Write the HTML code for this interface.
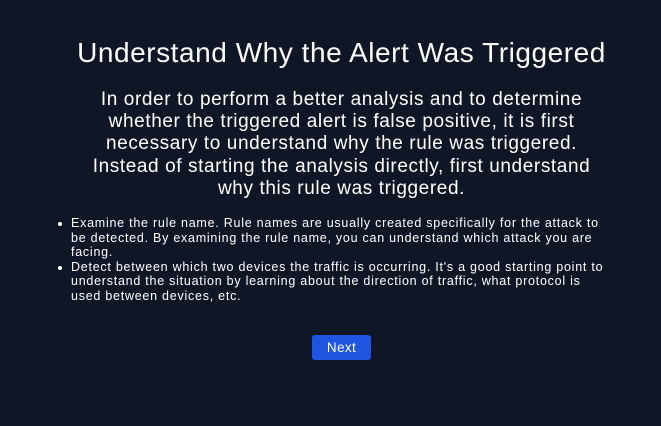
<!DOCTYPE html>
<html><head><style>
html,body{margin:0;padding:0;background:#0f1727;width:661px;height:426px;overflow:hidden;font-family:"Liberation Sans",sans-serif;color:#fff}
h1{position:absolute;top:37px;left:11px;width:661px;text-align:center;margin:0;font-weight:400;font-size:28px;letter-spacing:0.55px;line-height:32px;white-space:nowrap}
.p{position:absolute;top:89px;left:11px;width:661px;text-align:center;font-size:19px;letter-spacing:0.6px;line-height:22.2px;white-space:nowrap}
ul{position:absolute;top:216px;left:57px;margin:0;padding:0;list-style:none;font-size:12.5px;letter-spacing:0.75px;line-height:14.6px;white-space:nowrap}
li{position:relative;padding-left:14px}
li:before{content:"";position:absolute;left:1px;top:6px;width:4px;height:4px;border-radius:50%;background:#fff}
.btn{position:absolute;left:312px;top:335px;width:59px;height:25px;background:#1f55e0;border-radius:3px;font-size:13.5px;letter-spacing:0.4px;line-height:25px;text-align:center}
</style></head><body>
<h1>Understand Why the Alert Was Triggered</h1>
<div class="p">In order to perform a better analysis and to determine<br>whether the triggered alert is false positive, it is first<br>necessary to understand why the rule was triggered.<br>Instead of starting the analysis directly, first understand<br>why this rule was triggered.</div>
<ul>
<li>Examine the rule name. Rule names are usually created specifically for the attack to<br>be detected. By examining the rule name, you can understand which attack you are<br>facing.</li>
<li>Detect between which two devices the traffic is occurring. It's a good starting point to<br>understand the situation by learning about the direction of traffic, what protocol is<br>used between devices, etc.</li>
</ul>
<div class="btn">Next</div>
</body></html>
